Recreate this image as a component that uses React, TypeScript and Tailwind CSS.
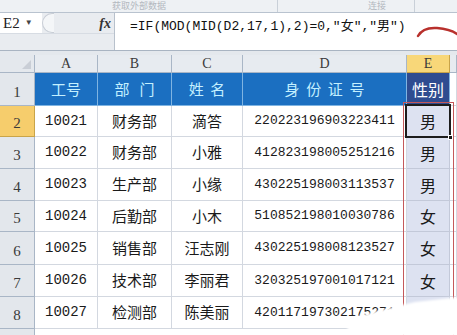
import React from "react";

const rows = [
  ["10021", "财务部", "滴答", "220223196903223411", "男"],
  ["10022", "财务部", "小雅", "412823198005251216", "男"],
  ["10023", "生产部", "小缘", "430225198003113537", "男"],
  ["10024", "后勤部", "小木", "510852198010030786", "女"],
  ["10025", "销售部", "汪志刚", "430225198008123527", "女"],
  ["10026", "技术部", "李丽君", "320325197001017121", "女"],
  ["10027", "检测部", "陈美丽", "420117197302175271", "男"],
];

const mono = "[font-family:'Liberation_Mono','Noto_Sans_CJK_SC',monospace]";
const cjk = "[font-family:'Noto_Sans_CJK_SC',sans-serif]";
const serif = "[font-family:'Liberation_Serif','DejaVu_Serif',serif]";

const cell = "flex items-center justify-center border-r border-b border-[#d3d8e0] bg-white text-[#1a1a1a]";
const colHead = `flex items-center justify-center border-r border-b border-[#a9b6c6] bg-[#e7ebf0] text-[14px] text-[#3a3a3a] ${serif}`;
const rowHead = `flex items-end justify-center pb-[2px] border-r border-b border-[#a9b6c6] bg-[#e3e7ec] text-[15px] text-[#3a3a3a] ${serif}`;
const blueHead = `flex items-center justify-center border-r border-b border-[#7fb4e2] bg-[#1b6fc1] text-[15px] text-[#c4f0ff] ${cjk}`;

export default function App() {
  return (
    <div className="relative w-[457px] h-[335px] overflow-hidden bg-white">
      {/* ribbon remnant */}
      <div className="flex h-[13px] border-b border-[#b9c3cf] bg-[#eef1f4] text-[9px] leading-[12px] text-[#b3b8bf]">
        <div className={`w-[278px] border-r border-[#c9d0d8] pl-[112px] ${cjk}`}>获取外部数据</div>
        <div className={`w-[137px] border-r border-[#c9d0d8] pl-[90px] ${cjk}`}>连接</div>
        <div className="flex-1" />
      </div>

      {/* formula bar */}
      <div className="flex h-[37px]">
        <div className="flex w-[114px] flex-col bg-[#e9ecf0]">
          <div className="flex h-[20px] items-center">
            <div className={`flex h-[20px] w-[42px] items-center bg-white pl-[3px] text-[15px] text-[#222] ${serif}`}>
              E2
              <span className="ml-[5px] text-[8px] text-[#444]">▼</span>
            </div>
            <div className="h-[20px] w-[12px] rounded-l-full border border-r-0 border-[#c9ced6] bg-[#f4f6f8]" />
            <div className="flex-1" />
            <span className={`mr-[3px] text-[14px] font-bold italic text-[#333] ${serif}`}>fx</span>
          </div>
          <div className="flex-1 border-t border-[#d7dce3]" />
        </div>
        <div className={`flex-1 border-l border-[#b8c1cc] bg-white pl-[15px] pt-[6px] text-[13px] leading-[16px] text-[#111] ${mono}`}>
          =IF(MOD(MID(D2,17,1),2)=0,″女″,″男″)
        </div>
      </div>
      <div className="h-[5px] border-t border-[#a9b4c2] bg-[#e4e8ed]" />

      {/* sheet grid */}
      <div className="grid grid-cols-[35px_63px_74px_71px_164px_43px_1fr] grid-rows-[18px_33px_31px_32px_32px_31px_33px_32px_32px_1fr] h-[280px]">
        <div className="relative border-r border-b border-[#a9b6c6] bg-[#e4e8ed]">
          <div className="absolute right-[3px] bottom-[3px] h-0 w-0 border-l-[9px] border-l-transparent border-b-[9px] border-b-[#c9ced6]" />
        </div>
        <div className={colHead}>A</div>
        <div className={colHead}>B</div>
        <div className={colHead}>C</div>
        <div className={colHead}>D</div>
        <div className={`flex items-center justify-center border-r border-b border-[#c9a449] bg-[#f8d779] text-[14px] text-[#3a3a3a] ${serif}`}>E</div>
        <div className={colHead} />

        <div className={rowHead}>1</div>
        <div className={blueHead}>工号</div>
        <div className={blueHead}>部&nbsp;&nbsp;&nbsp;门</div>
        <div className={blueHead}>姓&nbsp;&nbsp;名</div>
        <div className={blueHead}>身&nbsp;&nbsp;份&nbsp;&nbsp;证&nbsp;&nbsp;号</div>
        <div className={`flex items-center justify-center border-r border-b border-[#7fb4e2] bg-[#2f4c90] text-[16px] text-white ${cjk}`}>性别</div>
        <div className={cell} />

        {rows.map((r, i) => (
          <React.Fragment key={r[0]}>
            <div className={i === 0 ? `flex items-end justify-center pb-[2px] border-r border-b border-[#c9a449] bg-[#f6cd6c] text-[15px] text-[#3a3a3a] ${serif}` : rowHead}>
              {i + 2}
            </div>
            <div className={`${cell} text-[14px] ${mono}`}>{r[0]}</div>
            <div className={`${cell} text-[15px] ${cjk}`}>{r[1]}</div>
            <div className={`${cell} text-[15px] ${cjk}`}>{r[2]}</div>
            <div className={`${cell} text-[13px] ${mono}`}>{r[3]}</div>
            <div className={`flex items-center justify-center border-r border-b border-[#c3c9d9] bg-[#dde2f1] text-[16px] text-[#1a1a1a] ${cjk}`}>
              {r[4]}
            </div>
            <div className={cell} />
          </React.Fragment>
        ))}

        <div className="border-r border-[#a9b6c6] bg-[#e3e7ec]" />
        <div className="col-span-6 bg-white" />
      </div>

      {/* red outline around column E */}
      <div className="absolute left-[403px] top-[102px] h-[235px] w-[51px] border border-[#c4585a]" />

      {/* active cell E2 */}
      <div className="absolute left-[405px] top-[104px] h-[34px] w-[46px] border-2 border-[#1c1c1c]" />
      <div className="absolute left-[448px] top-[135px] h-[5px] w-[5px] border border-white bg-[#1c1c1c]" />

      {/* red hand-drawn mark and white smear */}
      <svg className="absolute left-0 top-0" width="457" height="335">
        <path d="M418 36 Q423 27 437 28 Q450 29 457 34" fill="none" stroke="#b8302c" strokeWidth="2.5" strokeLinecap="round" />
        <defs>
          <filter id="soft" x="-10%" y="-30%" width="120%" height="160%">
            <feGaussianBlur stdDeviation="1" />
          </filter>
        </defs>
        <polygon points="345,336 351,318 385,309 415,302 460,297 460,336" fill="#ffffff" filter="url(#soft)" />
      </svg>
    </div>
  );
}
